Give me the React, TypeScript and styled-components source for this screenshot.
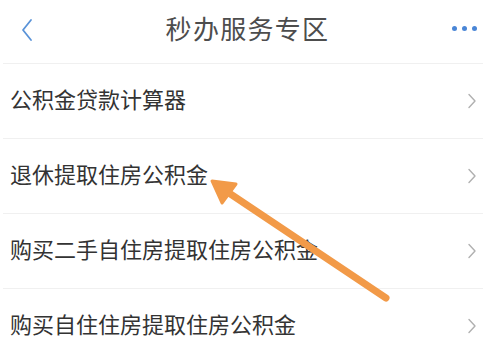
import styled, { createGlobalStyle } from "styled-components";

const GlobalStyle = createGlobalStyle`
  html, body {
    margin: 0;
    padding: 0;
    background: #fff;
    font-family: "Noto Sans CJK SC", "Noto Sans", sans-serif;
  }
`;

const items = [
  "公积金贷款计算器",
  "退休提取住房公积金",
  "购买二手自住房提取住房公积金",
  "购买自住住房提取住房公积金",
];

export default function App() {
  return (
    <>
      <GlobalStyle />
      <Page>
        <Header>
          <BackBtn>
            <svg width="12" height="24" viewBox="0 0 12 24">
              <path d="M10 2 L2 12 L10 22" fill="none" stroke="#5a93d8" strokeWidth="1.8" strokeLinecap="round" strokeLinejoin="round" />
            </svg>
          </BackBtn>
          <Title>秒办服务专区</Title>
          <More>
            <Dot />
            <Dot />
            <Dot />
          </More>
        </Header>
        <List>
          {items.map((txt) => (
            <Row key={txt}>
              <RowText>{txt}</RowText>
              <svg width="10" height="16" viewBox="0 0 10 16">
                <path d="M2 1.5 L8 8 L2 14.5" fill="none" stroke="#b0b0b0" strokeWidth="1.4" strokeLinecap="round" strokeLinejoin="round" />
              </svg>
            </Row>
          ))}
        </List>
        <Arrow width="486" height="350" viewBox="0 0 486 350">
          <line x1="386" y1="298" x2="226" y2="191" stroke="#f29a48" strokeWidth="7" strokeLinecap="round" />
          <path d="M212 181 L236 184 L222 203 Z" fill="#f29a48" stroke="#f29a48" strokeWidth="3" strokeLinejoin="round" />
        </Arrow>
      </Page>
    </>
  );
}

const Page = styled.div`
  position: relative;
  width: 486px;
  height: 350px;
  overflow: hidden;
  background: #fff;
`;

const Header = styled.div`
  height: 63px;
  display: flex;
  align-items: center;
  justify-content: space-between;
  padding: 0 9px 0 21px;
  box-sizing: border-box;
`;

const BackBtn = styled.div`
  width: 14px;
  display: flex;
  align-items: center;
  margin-top: -4px;
`;

const Title = styled.h1`
  margin: 0 0 8px 8px;
  font-size: 26px;
  font-weight: 400;
  letter-spacing: 1.3px;
  color: #4d4d4d;
`;

const More = styled.div`
  display: flex;
  gap: 5px;
  align-items: center;
  margin-top: -6px;
`;

const Dot = styled.span`
  width: 5px;
  height: 5px;
  border-radius: 50%;
  background: #4a86d6;
`;

const List = styled.div`
  display: flex;
  flex-direction: column;
`;

const Row = styled.div`
  height: 74px;
  margin: 0 3px;
  padding: 0 6px 0 7px;
  display: flex;
  align-items: center;
  justify-content: space-between;
  border-top: 1.5px solid #f0f0f0;
`;

const RowText = styled.span`
  font-size: 22px;
  color: #333;
  margin-top: -7px;
`;

const Arrow = styled.svg`
  position: absolute;
  left: 0;
  top: 0;
  pointer-events: none;
`;
